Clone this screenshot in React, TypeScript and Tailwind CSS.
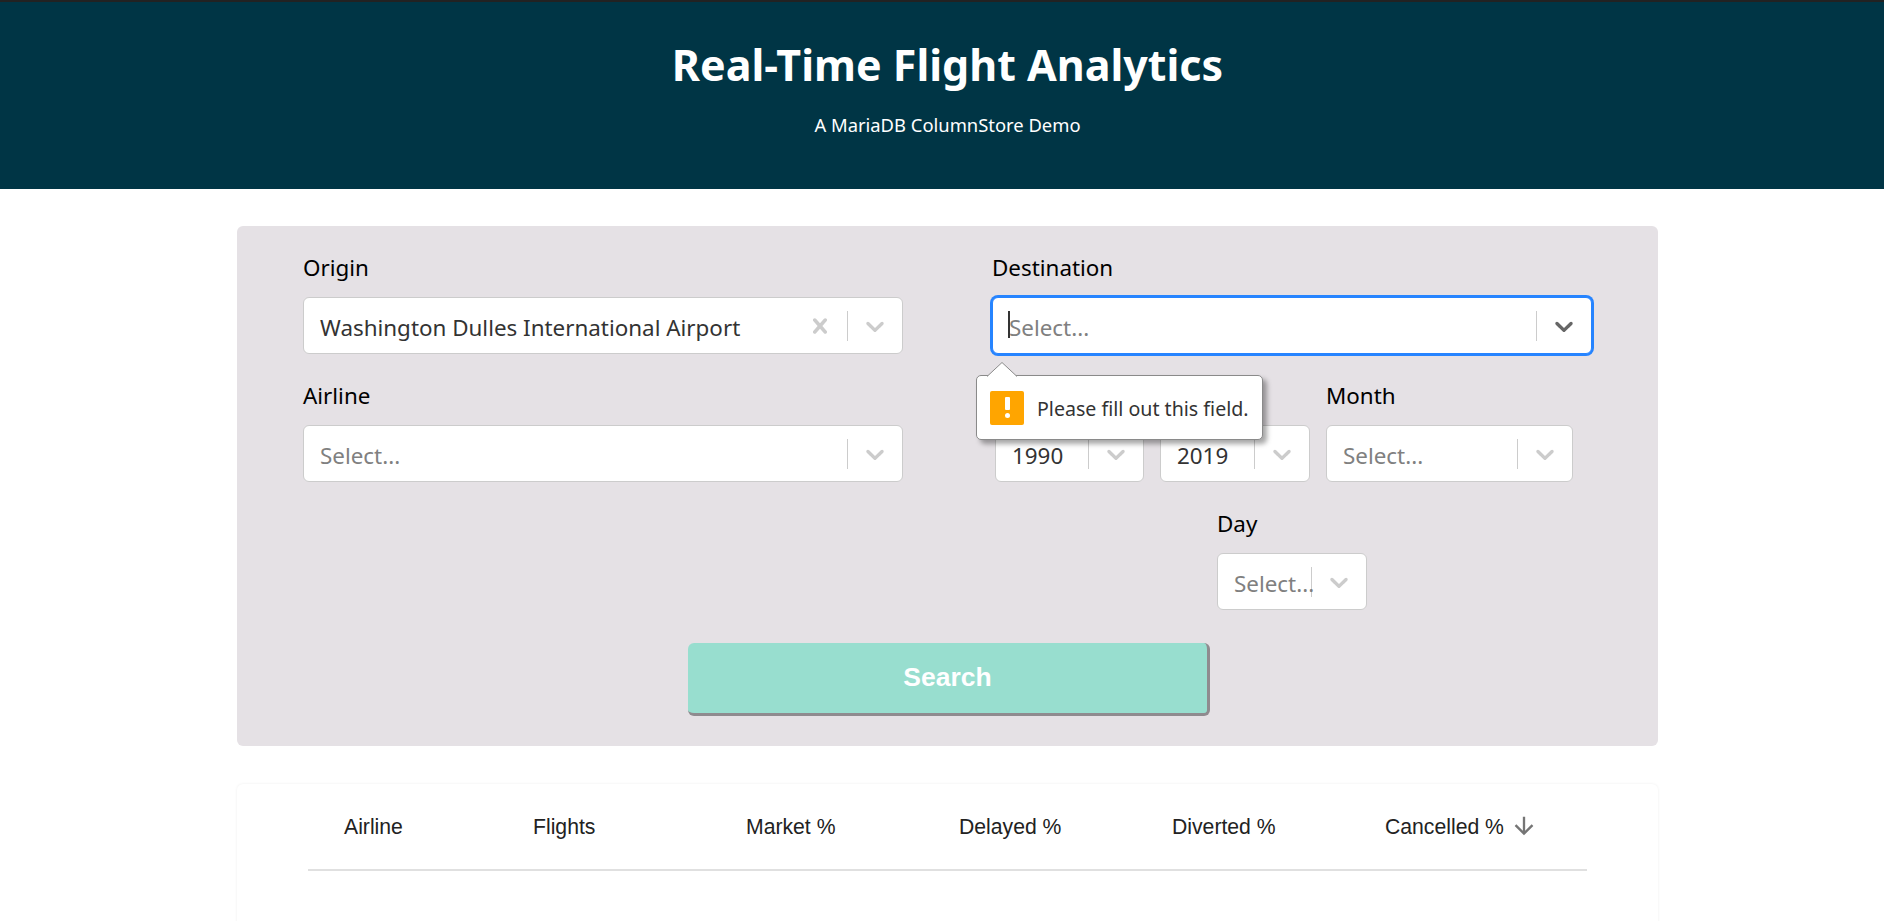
import { clsx } from "clsx";

const SEGOE = "font-['Noto_Sans','Open_Sans',sans-serif]";

function Chevron({ dark }: { dark?: boolean }) {
  return (
    <svg viewBox="0 0 20 20" fill="currentColor" className={clsx("w-[30px] h-[30px]", dark ? "text-[#666666]" : "text-[#cccccc]")}>
      <path d="M4.516 7.548c0.436-0.446 1.043-0.481 1.576 0l3.908 3.747 3.908-3.747c0.533-0.481 1.141-0.446 1.574 0 0.436 0.445 0.408 1.197 0 1.615-0.406 0.418-4.695 4.502-4.695 4.502-0.217 0.223-0.502 0.335-0.787 0.335s-0.57-0.112-0.789-0.335c0 0-4.287-4.084-4.695-4.502s-0.436-1.17 0-1.615z" />
    </svg>
  );
}

function Cross() {
  return (
    <svg viewBox="0 0 20 20" fill="currentColor" className="w-[30px] h-[30px] text-[#cccccc]">
      <path d="M14.348 14.849c-0.469 0.469-1.229 0.469-1.697 0l-2.651-3.030-2.651 3.029c-0.469 0.469-1.229 0.469-1.697 0-0.469-0.469-0.469-1.229 0-1.697l2.758-3.15-2.759-3.152c-0.469-0.469-0.469-1.228 0-1.697s1.228-0.469 1.697 0l2.652 3.031 2.651-3.031c0.469-0.469 1.228-0.469 1.697 0s0.469 1.229 0 1.697l-2.758 3.152 2.758 3.15c0.469 0.469 0.469 1.229 0 1.698z" />
    </svg>
  );
}

function Select({
  label,
  value,
  width,
  clearable,
  focused,
}: {
  label?: string;
  value?: string;
  width: string;
  clearable?: boolean;
  focused?: boolean;
}) {
  return (
    <div className={clsx("flex flex-col shrink-0", width)}>
      <label className="h-[29px] text-[22.4px] leading-[29px] text-black">{label}</label>
      <div
        className={clsx(
          "mt-[15px] h-[57px] flex items-center bg-white rounded-[6px] border",
          focused ? "border-[#2684ff] ring-2 ring-[#2684ff]" : "border-[#cccccc]"
        )}
      >
        <div className="relative flex-1 min-w-0 pl-[16px] pt-[5px] text-[22.4px] leading-[30px] whitespace-nowrap">
          {focused && <span className="absolute left-[15px] top-[3px] w-[2px] h-[27px] bg-[#333333]" />}
          {value ? (
            <span className="text-[#333333]">{value}</span>
          ) : (
            <span className="text-[#808080]">Select...</span>
          )}
        </div>
        {clearable && (
          <div className="px-[12px] flex items-center">
            <Cross />
          </div>
        )}
        <div className="w-px h-[30px] bg-[#cccccc] shrink-0" />
        <div className="px-[12px] flex items-center shrink-0">
          <Chevron dark={focused} />
        </div>
      </div>
    </div>
  );
}

function ValidationBubble() {
  return (
    <div className="absolute left-[-16px] top-[122px] w-[287px] h-[65px] z-10">
      <svg viewBox="0 0 30 15" className="absolute left-[11px] top-[-13px] w-[30px] h-[15px] z-10">
        <path d="M0 14.5 L15 0.5 L30 14.5" fill="#ffffff" stroke="#8a8a8a" strokeWidth="1" />
      </svg>
      <div className="h-full flex items-center bg-white border border-[#8a8a8a] rounded-[5px] shadow-[4px_4px_5px_rgba(0,0,0,0.35)] pl-[13px]">
        <div className="w-[34px] h-[34px] rounded-[2px] bg-[#ffa500] flex flex-col items-center justify-center gap-[3px]">
          <span className="w-[5px] h-[13px] bg-white rounded-[1px]" />
          <span className="w-[5px] h-[5px] bg-white rounded-full" />
        </div>
        <span className="ml-[13px] pt-[2px] text-[19.6px] text-[#333333] whitespace-nowrap">Please fill out this field.</span>
      </div>
    </div>
  );
}

const columns = [
  { name: "Airline", width: "w-[189px]" },
  { name: "Flights", width: "w-[213px]" },
  { name: "Market %", width: "w-[213px]" },
  { name: "Delayed %", width: "w-[213px]" },
  { name: "Diverted %", width: "w-[213px]" },
  { name: "Cancelled %", width: "w-[200px]", sorted: true },
];

export default function App() {
  return (
    <div className="h-screen overflow-hidden bg-white">
      <div className={clsx("w-[1895px]", SEGOE)}>
        <header className="h-[189px] bg-[#003545] border-t-2 border-[#222222] flex flex-col items-center text-white">
          <h1 className="mt-[31px] text-[43px] leading-[64px] font-bold">Real-Time Flight Analytics</h1>
          <p className="mt-[14px] text-[18.4px] leading-[28px]">A MariaDB ColumnStore Demo</p>
        </header>

        <main className="w-[1421px] mx-auto">
          <section className="mt-[37px] h-[520px] bg-[#e5e1e5] rounded-[6px] px-[66px] pt-[27px] flex flex-col">
            <div className="flex justify-between">
              <div className="flex flex-col gap-[27px]">
                <Select label="Origin" value="Washington Dulles International Airport" width="w-[600px]" clearable />
                <Select label="Airline" width="w-[600px]" />
              </div>
              <div className="relative flex flex-col gap-[27px] w-[600px]">
                <Select label="Destination" width="w-[600px]" focused />
                <div className="flex gap-[16px] pl-[3px]">
                  <Select value="1990" width="w-[149px]" />
                  <Select value="2019" width="w-[150px]" />
                  <Select label="Month" width="w-[247px]" />
                </div>
                <div className="flex justify-center">
                  <Select label="Day" width="w-[150px]" />
                </div>
                <ValidationBubble />
              </div>
            </div>
            <button className="mt-[33px] self-center ml-[3px] w-[522px] h-[73px] bg-[#98decf] border-r-[3px] border-b-[3px] border-[#8f8b8f] rounded-[6px] text-white text-[26.5px] font-bold font-['Liberation_Sans',sans-serif]">
              Search
            </button>
          </section>

          <section className="mt-[38px] h-[400px] bg-white rounded-[6px] shadow-[0_0_3px_rgba(0,0,0,0.07)] px-[71px]">
            <div className="h-[87px] flex items-center border-b-2 border-[#e0e0e0] pl-[36px] font-['Liberation_Sans',sans-serif] text-[21.2px] text-[#222222]">
              {columns.map((col) => (
                <div key={col.name} className={clsx("flex items-center", col.width)}>
                  {col.name}
                  {col.sorted && (
                    <svg viewBox="0 0 24 24" fill="#757575" className="ml-[6px] w-[28px] h-[28px]">
                      <path d="M20 12l-1.41-1.41L13 16.17V4h-2v12.17l-5.58-5.59L4 12l8 8 8-8z" />
                    </svg>
                  )}
                </div>
              ))}
            </div>
          </section>
        </main>
      </div>
    </div>
  );
}
